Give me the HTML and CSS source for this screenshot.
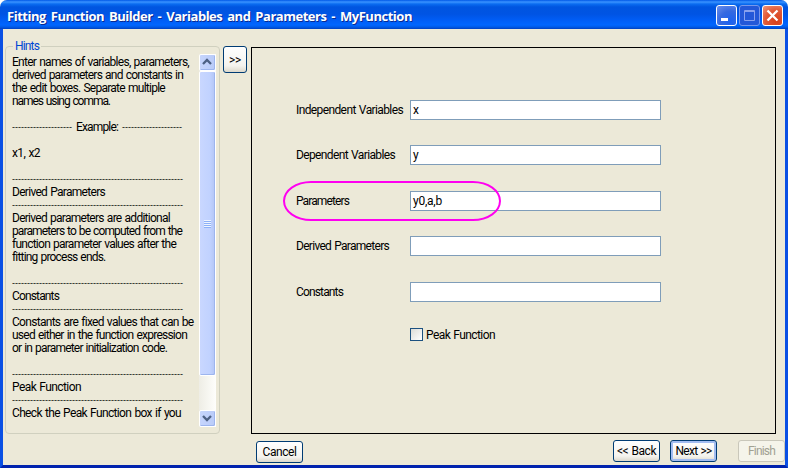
FILE: index.html
```html
<!DOCTYPE html>
<html lang="en">
<head>
<meta charset="utf-8">
<title>Fitting Function Builder</title>
<link rel="stylesheet" href="styles.css">
</head>
<body>
<div class="window">
  <header class="titlebar">
    <h1><span data-w="405">Fitting Function Builder - Variables and Parameters - MyFunction</span></h1>
    <div class="controls">
      <div class="ctl"><svg width="21" height="21"><path fill="#fff" d="M5 13h7v3H5z"/></svg></div>
      <div class="ctl dim"><svg width="21" height="21"><path fill="none" stroke="#8aa2ee" d="M5.500 5.500h10v10h-10zM5 6.500h11"/></svg></div>
      <div class="ctl close"><svg width="21" height="21"><path stroke="#fff" stroke-width="2.300" d="M5.500 5.500l10 10M15.500 5.500l-10 10"/></svg></div>
    </div>
  </header>
  <main class="body">
    <fieldset class="hints">
      <legend><span data-w="24">Hints</span></legend>
      <div class="text">
        <p><span data-w="177">Enter names of variables, parameters,</span></p>
        <p><span data-w="171">derived parameters and constants in</span></p>
        <p><span data-w="153">the edit boxes. Separate multiple</span></p>
        <p><span data-w="98">names using comma.</span></p>
        <p></p>
        <p class="example"><span class="rule" data-w="60">--------------------</span><span data-w="42">Example:</span><span class="rule" data-w="60">--------------------</span></p>
        <p></p>
        <p><span data-w="28">x1, x2</span></p>
        <p></p>
        <p><span class="rule" data-w="171">---------------------------------------------------------</span></p>
        <p><span data-w="93">Derived Parameters</span></p>
        <p><span class="rule" data-w="171">---------------------------------------------------------</span></p>
        <p><span data-w="158">Derived parameters are additional</span></p>
        <p><span data-w="170">parameters to be computed from the</span></p>
        <p><span data-w="164">function parameter values after the</span></p>
        <p><span data-w="93">fitting process ends.</span></p>
        <p></p>
        <p><span class="rule" data-w="171">---------------------------------------------------------</span></p>
        <p><span data-w="47">Constants</span></p>
        <p><span class="rule" data-w="171">---------------------------------------------------------</span></p>
        <p><span data-w="181">Constants are fixed values that can be</span></p>
        <p><span data-w="175">used either in the function expression</span></p>
        <p><span data-w="155">or in parameter initialization code.</span></p>
        <p></p>
        <p><span class="rule" data-w="171">---------------------------------------------------------</span></p>
        <p><span data-w="69">Peak Function</span></p>
        <p><span class="rule" data-w="171">---------------------------------------------------------</span></p>
        <p><span data-w="169">Check the Peak Function box if you</span></p>
      </div>
      <div class="scroll">
        <div class="arrow"><svg width="14" height="14"><path fill="none" stroke="#4d6185" stroke-width="2.300" d="M3 9l4-4 4 4"/></svg></div>
        <div class="thumb"><i></i></div>
        <div class="arrow down"><svg width="14" height="14"><path fill="none" stroke="#4d6185" stroke-width="2.300" d="M3 5l4 4 4-4"/></svg></div>
      </div>
    </fieldset>
    <div class="btn expand"><span data-w="12">&gt;&gt;</span></div>
    <section class="panel">
      <div class="field"><label><span data-w="107">Independent Variables</span></label><div class="input"><span data-w="5">x</span></div></div>
      <div class="field"><label><span data-w="99">Dependent Variables</span></label><div class="input"><span data-w="5">y</span></div></div>
      <div class="field marked"><label><span data-w="53">Parameters</span></label><div class="input"><span data-w="29">y0,a,b</span></div><div class="ring"></div></div>
      <div class="field"><label><span data-w="93">Derived Parameters</span></label><div class="input"></div></div>
      <div class="field"><label><span data-w="47">Constants</span></label><div class="input"></div></div>
      <div class="check"><i></i><span data-w="69">Peak Function</span></div>
    </section>
  </main>
  <footer>
    <div class="btn cancel"><span data-w="34">Cancel</span></div>
    <div class="btn back"><span data-w="39">&lt;&lt; Back</span></div>
    <div class="btn next"><span data-w="36">Next &gt;&gt;</span></div>
    <div class="btn finish"><span data-w="27">Finish</span></div>
  </footer>
</div>
<script src="fit.js"></script>
</body>
</html>
```
FILE: styles.css
```css
* { box-sizing: border-box; }
body { margin: 0; background: #fff; font: 12px/13px Roboto, "Liberation Sans", sans-serif; word-spacing: 0.8px; color: #000; }
h1, p, fieldset, legend { margin: 0; padding: 0; }
svg { display: block; }
span { display: inline-block; white-space: pre; }
.window {
  width: 788px; height: 468px; overflow: hidden;
  display: flex; flex-direction: column;
  background: #ece9d8;
  border-radius: 7px 7px 0 0;
}
.titlebar {
  height: 29px; flex: none;
  display: flex; justify-content: space-between;
  padding: 5px 5px 0 7px;
  background: linear-gradient(#0058e6 0, #3a93ff 2px, #0a6cf0 4px, #0055e0 7px, #0054e3 14px, #005df5 20px, #0066ff 25px, #005be8 27px, #0040c0 29px);
}
h1 { font: bold 13px/23px "Open Sans", sans-serif; word-spacing: 2px; color: #fff; text-shadow: 1px 1px 0 #0a2a90; }
.controls { display: flex; gap: 2px; }
.ctl {
  width: 21px; height: 21px; border: 1px solid #fff; border-radius: 3px;
  background: radial-gradient(circle at 70% 80%, #1c62f0, #3569e0 50%, #6c90ec);
}
.ctl svg { margin: -1px; }
.dim { border-color: #7797eb; background: #2458d8; }
.close { background: radial-gradient(circle at 70% 80%, #d9401a, #e05a38 55%, #f0977c); }
.body {
  height: 405px; flex: none; display: flex; align-items: flex-start;
  border: solid #0a50e4; border-width: 0 3px;
  padding-left: 2px;
}
.hints {
  width: 215px; height: 394px; margin-top: 11px; min-width: 0;
  border: 1px solid #d0d0bf; border-radius: 4px;
  display: flex; padding: 0 3px 0 6px;
}
legend { margin-left: 1px; padding: 0 2px; height: 13px; color: #0046d5; }
.text { width: 187px; height: 371px; padding-top: 3px; overflow: hidden; flex: none; }
p { height: 13px; }
.rule { font: 9px/13px "Liberation Sans", sans-serif; vertical-align: top; }
.example { display: flex; gap: 4px; }
.scroll {
  width: 17px; height: 373px; margin-top: 1px; padding: 0;
  display: flex; flex-direction: column; flex: none;
  background: linear-gradient(90deg, #eeede5, #fefefb);
}
.arrow, .thumb {
  border: 1px solid #fff; border-radius: 2px;
  background: linear-gradient(90deg, #c6d5fd, #b9cbf8);
  box-shadow: inset -1px -1px #9db5ee;
}
.arrow { height: 17px; flex: none; }
.thumb { height: 305px; display: flex; align-items: center; justify-content: center; background: linear-gradient(90deg, #c9d7ff, #c1d2ff 65%, #b2c5f5); }
.thumb i { width: 7px; height: 8px; background: repeating-linear-gradient(#eef4fe 0 1px, #8cb0f8 1px 2px); }
.down { margin-top: auto; }
.btn {
  width: 47px; height: 22px; flex: none;
  border: 1px solid #003c74; border-radius: 3px;
  background: linear-gradient(#fff, #f4f3ee 75%, #dcd8cb);
  display: flex; align-items: center; justify-content: center;
}
.expand { width: 24px; height: 27px; margin: 17px 0 0 3px; padding-top: 2px; }
.panel {
  width: 525px; height: 387px; margin: 18px 0 0 4px;
  border: 1px solid #000; padding: 52px 0 0 44px;
}
.field { display: flex; align-items: center; height: 20px; margin-bottom: 25px; position: relative; }
.field:nth-child(2), .field:nth-child(4) { margin-bottom: 26px; }
label { width: 114px; height: 13px; }
.input { width: 251px; height: 20px; border: 1px solid #7f9db9; background: #fff; padding: 3px 2px; }
.ring {
  position: absolute; left: -13px; top: -10px; width: 218px; height: 40px;
  border: 2px solid #ff00f0; border-radius: 28px / 20px;
}
.check { display: flex; align-items: center; gap: 3px; margin: 26px 0 0 114px; height: 13px; }
.check span { padding-top: 2px; }
.check i { width: 13px; height: 13px; border: 1px solid #1c5180; background: linear-gradient(135deg, #dcdcd7, #fff); }
footer {
  flex: 1; display: flex; align-items: flex-start;
  border: solid #0a50e4; border-width: 0 3px;
  border-bottom: 3px solid #0022ad;
  padding: 6px 0 0 253px;
}
.cancel { margin-top: 1px; }
.back { margin-left: 310px; }
.next { margin-left: 10px; box-shadow: inset 0 0 0 2px #a3bdf1; }
.finish { margin-left: 21px; border-color: #c9c7ba; background: #f5f4ea; color: #a1a192; }
```
FILE: fit.js
```js
// Adjusts tracking so each label keeps its fixed dialog width.
document.querySelectorAll("[data-w]").forEach(function (el) {
  var w = Number(el.dataset.w);
  var natural = el.getBoundingClientRect().width;
  el.style.letterSpacing = (w - natural) / el.textContent.length + "px";
});
```
